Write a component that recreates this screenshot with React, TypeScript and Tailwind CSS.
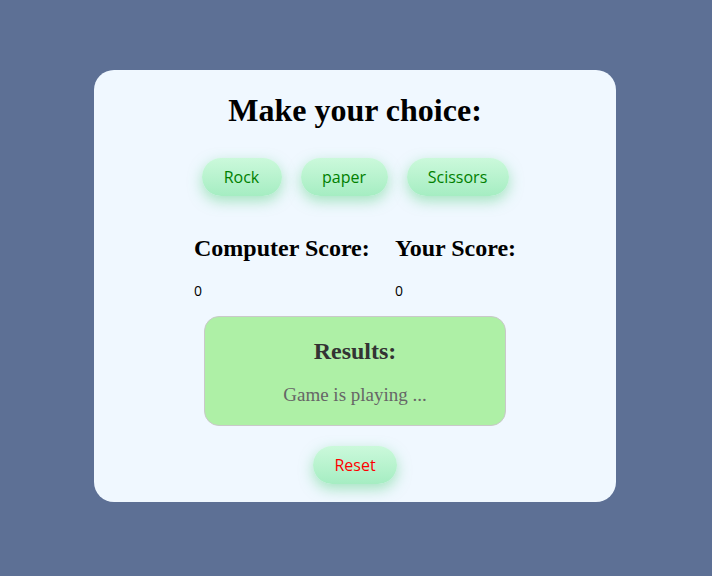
const choices = [
  { name: "Rock", w: "w-[80px]" },
  { name: "paper", w: "w-[87px]" },
  { name: "Scissors", w: "w-[102px]" },
];

function PillButton({ label, className }: { label: string; className: string }) {
  return (
    <button
      className={`h-[38px] rounded-full bg-gradient-to-b from-[#cbf9db] to-[#a5edc2] shadow-[0_5px_14px_rgba(90,210,130,0.5)] text-[16px] font-['Open_Sans','Noto_Sans',sans-serif] ${className}`}
    >
      {label}
    </button>
  );
}

export default function App() {
  return (
    <div className="min-h-[576px] w-full bg-[#5d7095] flex justify-center pt-[70px] pr-[2px]">
      <div className="w-[522px] h-[432px] bg-[#f0f8ff] rounded-[20px] flex flex-col items-center">
        <h1 className="mt-[22px] h-[37px] leading-[37px] text-[32px] font-bold text-black font-['Liberation_Serif',serif]">
          Make your choice:
        </h1>

        <div className="mt-[29px] flex gap-[19px]">
          {choices.map((c) => (
            <PillButton key={c.name} label={c.name} className={`${c.w} text-[#008000]`} />
          ))}
        </div>

        <div className="mt-[38px] grid grid-cols-[201px_auto] self-start pl-[100px]">
          <h2 className="h-[28px] leading-[28px] text-[24px] font-bold text-black font-['Liberation_Serif',serif] whitespace-nowrap">
            Computer Score:
          </h2>
          <h2 className="h-[28px] leading-[28px] text-[24px] font-bold text-black font-['Liberation_Serif',serif] whitespace-nowrap">
            Your Score:
          </h2>
          <p className="mt-[19px] h-[20px] leading-[20px] text-[14px] text-black font-['Open_Sans',sans-serif]">0</p>
          <p className="mt-[19px] h-[20px] leading-[20px] text-[14px] text-black font-['Open_Sans',sans-serif]">0</p>
        </div>

        <div className="mt-[15px] w-[302px] h-[110px] rounded-[15px] bg-[#aef0a6] border border-[#c9c9c9] flex flex-col items-center font-['Liberation_Serif',serif]">
          <h2 className="mt-[20px] h-[28px] leading-[28px] text-[24px] font-bold text-[#333333]">Results:</h2>
          <p className="mt-[19px] h-[22px] leading-[22px] text-[19px] text-[#666666]">Game is playing ...</p>
        </div>

        <div className="mt-[20px]">
          <PillButton label="Reset" className="w-[84px] text-[#ff0000]" />
        </div>
      </div>
    </div>
  );
}
